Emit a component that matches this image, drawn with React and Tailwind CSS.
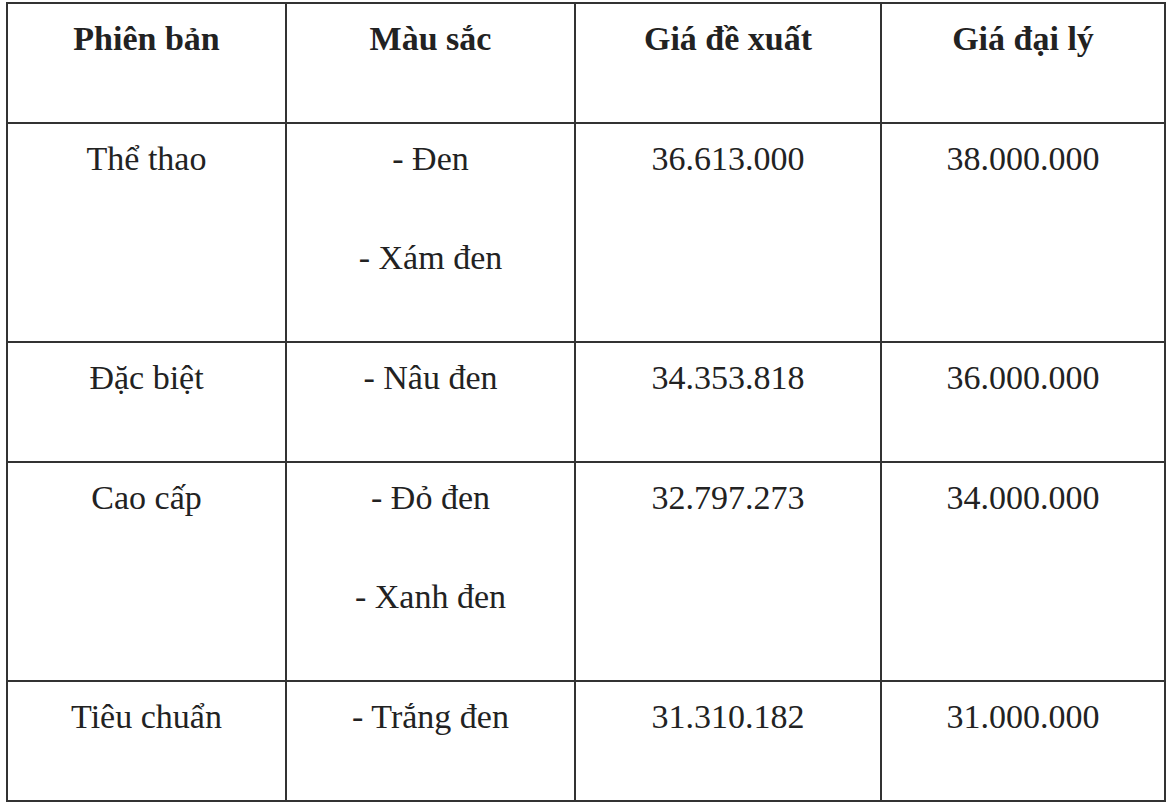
import React from "react";

const rows = [
  { edition: "Thể thao", colors: ["- Đen", "- Xám đen"], suggested: "36.613.000", dealer: "38.000.000" },
  { edition: "Đặc biệt", colors: ["- Nâu đen"], suggested: "34.353.818", dealer: "36.000.000" },
  { edition: "Cao cấp", colors: ["- Đỏ đen", "- Xanh đen"], suggested: "32.797.273", dealer: "34.000.000" },
  { edition: "Tiêu chuẩn", colors: ["- Trắng đen"], suggested: "31.310.182", dealer: "31.000.000" },
];

const Cell = ({ lines, head }) => {
  const Tag = head ? "th" : "td";
  return (
    <Tag className={`border-2 border-[#333] align-top pt-[10px] pb-[58px] px-2 text-center ${head ? "font-bold" : "font-normal"}`}>
      <div className="flex flex-col gap-[49px]">
        {lines.map((l, i) => (
          <div key={i} className="leading-[50px] whitespace-nowrap">
            {l}
          </div>
        ))}
      </div>
    </Tag>
  );
};

const App = () => {
  return (
    <div className="min-h-screen bg-white pt-[2px] pl-[6px] text-[#222] text-[34px] font-['Liberation_Serif']">
      <table className="w-[1160px] table-fixed border-collapse">
        <colgroup>
          <col className="w-[279px]" />
          <col className="w-[289px]" />
          <col className="w-[306px]" />
          <col className="w-[284px]" />
        </colgroup>
        <thead>
          <tr>
            <Cell head lines={["Phiên bản"]} />
            <Cell head lines={["Màu sắc"]} />
            <Cell head lines={["Giá đề xuất"]} />
            <Cell head lines={["Giá đại lý"]} />
          </tr>
        </thead>
        <tbody>
          {rows.map((r) => (
            <tr key={r.edition}>
              <Cell lines={[r.edition]} />
              <Cell lines={r.colors} />
              <Cell lines={[r.suggested]} />
              <Cell lines={[r.dealer]} />
            </tr>
          ))}
        </tbody>
      </table>
    </div>
  );
};

export default App;
